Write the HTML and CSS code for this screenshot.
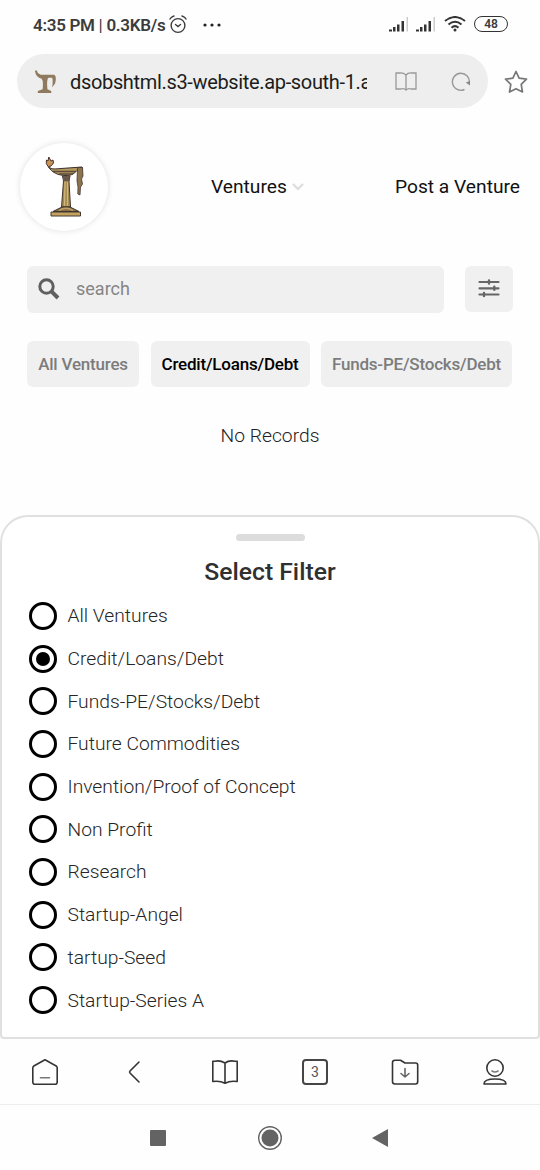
FILE: index.html
```html
<!DOCTYPE html>
<html lang="en">
<head>
<meta charset="utf-8">
<title>Ventures</title>
<link rel="stylesheet" href="styles.css">
</head>
<body>
<svg class="defs" width="0" height="0">
  <defs>
    <g id="torch">
      <path d="M9.500 14C13 16.500 16 16 22 15.500L43 14V17.500H38C34 22 31 22.500 27 22.500C19 22.500 13 19.500 9.500 14Z" fill="#b49a60" stroke="#3d3029" stroke-width="1"/>
      <path d="M14 18.500H37M20 21H34" stroke="#5d4a3a" stroke-width="1.300"/>
      <path d="M9.500 14Q6 10.500 7.500 7L9 8L9.800 4L12 8L14 7Q16 10 12 13Z" fill="#c69455" stroke="#4b3431" stroke-width="1"/>
      <path d="M38.500 14.500H43.500L44 23L42.500 26L43.500 31L41.500 34L41 42L38.800 41L39 34L38 28Z" fill="#8c754d" stroke="#443633" stroke-width=".8"/>
      <path d="M23.500 23H31L30 28L31.500 54H22.500L24.500 28Z" fill="#a58a50" stroke="#43352e" stroke-width="1"/>
      <path d="M26 29L25.500 53M28.500 29V53" stroke="#cfb67a" stroke-width="1.200"/>
      <path d="M24 23.500H30.500V28H24Z" fill="#69564d"/>
      <path d="M23 54H31L40 58.500H14Z" fill="#8a724d" stroke="#372d2b" stroke-width="1"/>
      <path d="M20 57.500Q27 53 34 57.500" fill="none" stroke="#c1a364" stroke-width="1.300"/>
      <path d="M12 59H41.500V63H12Z" fill="#c3a260" stroke="#493c31" stroke-width="1"/>
    </g>
    <g id="mark" fill="#8f7a5e">
      <path d="M1 1Q3-1 4 3L7 5H21Q24 6 22 14L19 18Q20 11 19 8H15Q13 10 14 20L18 22V24H4V22L9 20Q10 11 8 9Q2 8 1 1Z"/>
    </g>
    <g id="signal" fill="#333">
      <path d="M0 12.500h3v2H0zM4 10h2.500v4.500H4zM8 7.500h2.500v7H8zM12.500 4h2.500v10.500h-2.500z"/>
      <path d="M17.500 0H19v14.500h-1.500z" fill="#ccc"/>
    </g>
  </defs>
</svg>
<div class="screen">
  <div class="status">
    <span class="clock">4:35 PM <span class="pipe">|</span> 0.3KB/s</span>
    <svg class="alarm" width="18" height="19" viewBox="0 0 18 19" fill="none" stroke="#3c3c3c" stroke-width="1.400" stroke-linecap="round"><circle cx="9" cy="10.500" r="6.900"/><path d="M1 4Q2 2 5 1M13 1Q16 2 17 4M6.500 9.500L9 11.500L11.500 9.500"/></svg>
    <svg class="dots" width="18" height="4" viewBox="0 0 18 4" fill="#222"><circle cx="2" cy="2" r="1.600"/><circle cx="9" cy="2" r="1.600"/><circle cx="16" cy="2" r="1.600"/></svg>
    <span class="grow"></span>
    <svg class="sig" width="20" height="15"><use href="#signal"/></svg>
    <svg class="sig second" width="20" height="15"><use href="#signal"/></svg>
    <svg class="wifi" width="22" height="16" viewBox="0 0 22 16" fill="none" stroke="#333" stroke-width="2"><path d="M1 5Q11-3 21 5M4.500 8.500Q11 3 17.500 8.500M7.500 11.700Q11 8.500 14.500 11.700"/><circle cx="11" cy="14" r="1.500" fill="#333" stroke="none"/></svg>
    <span class="battery">48</span>
  </div>

  <div class="browser-bar">
    <div class="address">
      <svg class="favicon" width="23" height="24" viewBox="0 0 24 25"><use href="#mark"/></svg>
      <span class="url">dsobshtml.s3-website.ap-south-1.a</span>
      <svg class="reader" width="22" height="19" viewBox="0 0 22 19" fill="none" stroke="#999" stroke-width="1.300"><path d="M11 3Q8 .5 5 1H1V17H6Q9 16 11 18Q13 16 16 17H21V1H17Q13 .5 11 3ZM11 3V18"/></svg>
      <svg class="reload" width="20" height="20" viewBox="0 0 20 20"><path d="M13.500 17.500A8.500 8.500 0 1 1 18.300 11" fill="none" stroke="#999" stroke-width="1.400"/><path d="M14.800 10.500L19 9V13.500Z" fill="#888"/></svg>
    </div>
    <svg class="star" width="24" height="24" viewBox="0 0 24 24" fill="none" stroke="#777" stroke-width="1.700" stroke-linejoin="round"><path d="M12 1.500L15.100 8.100L22.500 9.200L17.200 14.400L18.500 22L12 18.700L5.500 22L6.800 14.400L1.500 9.200L8.900 8.100Z"/></svg>
  </div>

  <header class="site-header">
    <div class="logo"><svg width="52" height="65" viewBox="0 0 52 65"><use href="#torch"/></svg></div>
    <a class="ventures">Ventures<svg width="12" height="8" viewBox="0 0 12 8" fill="none" stroke="#dedede" stroke-width="2.400"><path d="M1 1L6 6L11 1"/></svg></a>
    <a class="post">Post a Venture</a>
  </header>

  <div class="search-row">
    <label class="search"><svg width="22" height="22" viewBox="0 0 22 22" fill="none" stroke="#606060" stroke-width="3"><circle cx="8.500" cy="8.500" r="6.700"/><path d="M13.200 13.200L20 20" stroke-width="4"/></svg><span>search</span></label>
    <div class="filter-button"><svg width="22" height="20" viewBox="0 0 22 20" stroke="#666" stroke-width="2.200" stroke-linecap="round"><path d="M1.500 4H20.500M1.500 10.300H20.500M1.500 16.500H20.500"/><path d="M11 2.500V5.500M16.300 8.800V11.800M6 15V18" stroke-width="2.400"/></svg></div>
  </div>
  <div class="chips">
    <span class="chip c1"><b>All Ventures</b></span>
    <span class="chip c2 selected"><b>Credit/Loans/Debt</b></span>
    <span class="chip c3"><b>Funds-PE/Stocks/Debt</b></span>
  </div>
  <p class="empty">No Records</p>

  <section class="sheet">
    <div class="handle"></div>
    <h1>Select Filter</h1>
    <ul>
      <li><i></i><span>All Ventures</span></li>
      <li class="on"><i></i><span>Credit/Loans/Debt</span></li>
      <li><i></i><span>Funds-PE/Stocks/Debt</span></li>
      <li><i></i><span>Future Commodities</span></li>
      <li><i></i><span>Invention/Proof of Concept</span></li>
      <li><i></i><span>Non Profit</span></li>
      <li><i></i><span>Research</span></li>
      <li><i></i><span>Startup-Angel</span></li>
      <li><i></i><span>tartup-Seed</span></li>
      <li><i></i><span>Startup-Series A</span></li>
    </ul>
  </section>

  <nav class="toolbar">
    <div><svg width="28" height="28" viewBox="0 0 28 28"><path d="M14 1.800L25.200 8Q26.200 8.700 26.200 10V24Q26.200 26.300 24 26.300H4Q1.800 26.300 1.800 24V10Q1.800 8.700 2.800 8Z"/><path d="M9.500 19.700H18.500" stroke="#777"/></svg></div>
    <div><svg width="28" height="28" viewBox="0 0 28 28"><path d="M18 4L9 13Q8.200 14 9 15L18 24"/></svg></div>
    <div><svg width="28" height="28" viewBox="0 0 28 28"><path d="M14 5Q9 2 4 3.200H1.800V23.500Q9 22.500 14 25.300Q19 22.500 26.200 23.500V3.200H24Q18 2 14 5ZM14 5V25"/></svg></div>
    <div><span class="tabs">3</span></div>
    <div><svg width="28" height="28" viewBox="0 0 28 28"><path d="M1.500 4.500Q1.500 2.200 4 2.200H9.500L14 5H24.500Q26.700 5 26.700 7V23.500Q26.700 26 24.500 26H4Q1.500 26 1.500 23.500Z"/><path d="M14 10.500V19M10 15.500L14 19L18 15.500" stroke="#666"/></svg></div>
    <div><svg width="28" height="28" viewBox="0 0 28 28"><circle cx="14" cy="10" r="8.200"/><path d="M11 13Q14 15 17 13" stroke="#777"/><path d="M3 26Q3 21 14 21Q25 21 25 26Z"/></svg></div>
  </nav>
  <nav class="system">
    <svg width="16" height="16"><rect width="16" height="16" rx="1" fill="#636363"/></svg>
    <svg width="26" height="26" viewBox="0 0 26 26"><circle cx="13" cy="13" r="11.300" fill="none" stroke="#636363" stroke-width="1.400"/><circle cx="13" cy="13" r="8.500" fill="#636363"/></svg>
    <svg width="16" height="18" viewBox="0 0 16 18"><path d="M0 9L16 0V18Z" fill="#636363"/></svg>
  </nav>
</div>
</body>
</html>
```
FILE: styles.css
```css
* { box-sizing: border-box; }
body { margin: 0; background: #fefefe; font-family: Roboto, sans-serif; color: #111; }
svg { display: block; flex-shrink: 0; }
.defs { width: 0; height: 0; overflow: hidden; float: left; }
.screen { width: 540px; height: 1170px; display: flex; flex-direction: column; overflow: hidden; }
.status { height: 50px; flex: none; display: flex; align-items: center; padding: 0 32px 0 33px; color: #3c3c3c; }
.clock { font-size: 17px; font-weight: 600; letter-spacing: -.3px; white-space: nowrap; width: 132px; }
.pipe { font-weight: 400; }
.alarm { margin-left: 4px; margin-top: -1px; }
.dots { margin-left: 16px; margin-top: -1px; }
.grow { flex: 1; }
.sig { margin-top: -1px; }
.second { margin-left: 7px; }
.wifi { margin: -2px 8px 0; }
.battery { width: 34px; height: 16px; margin-top: -2px; border: 1.500px solid #333; border-radius: 8px; font-size: 12px; font-weight: 600; line-height: 14px; text-align: center; }

.browser-bar { height: 62px; flex: none; padding: 4px 12px 4px 17px; display: flex; align-items: center; justify-content: space-between; }
.address { width: 471px; height: 54px; background: #eee; border-radius: 27px; display: flex; align-items: center; padding: 1px 17px 0; }
.url { width: 298px; margin-left: 13px; overflow: hidden; white-space: nowrap; font-size: 20px; letter-spacing: -.34px; line-height: 28px; color: #1c1c1c; }
.reader { margin-left: 28px; }
.reload { margin-left: 34px; }
.star { margin-top: 1px; }

.site-header { height: 149px; flex: none; display: flex; align-items: center; padding: 0 20px; font-size: 19.200px; }
.logo { width: 88px; height: 88px; border-radius: 50%; background: #fff; box-shadow: 0 0 6px rgba(0,0,0,.12); display: flex; align-items: center; justify-content: center; }
.logo svg { margin-top: -2px; margin-left: 1px; }
.ventures { display: flex; align-items: center; margin-left: 103px; }
.ventures svg { margin-left: 5px; }
.post { margin-left: auto; }

.search-row { flex: none; margin: 5px 27px 0; height: 47px; display: flex; justify-content: space-between; }
.search { width: 417px; background: #f0f0f0; border-radius: 6px; display: flex; align-items: center; padding: 0 0 2px 11px; color: #858585; font-size: 18px; }
.search span { margin-left: 16px; }
.filter-button { width: 48px; height: 46px; background: #f0f0f0; border-radius: 6px; display: flex; align-items: center; justify-content: center; padding-bottom: 2px; }
.chips { flex: none; height: 46px; margin: 28px 28px 0 27px; display: flex; justify-content: space-between; }
.chip { background: #f0f0f0; color: #7c7c7c; border-radius: 6px; font-size: 17px; letter-spacing: -.21px; white-space: nowrap; display: flex; align-items: center; justify-content: center; }
.chip b { font-weight: 500; }
.selected { color: #000; }
.c1 { width: 112px; }
.c2 { width: 159px; }
.c3 { width: 191px; }
.empty { flex: none; margin: 35px 0 0; height: 28px; line-height: 28px; text-align: center; font-size: 19.250px; font-weight: 300; color: #222; }

.sheet { flex: none; height: 524px; margin-top: 65px; border: 2px solid #e0e0e0; border-radius: 28px 28px 4px 4px; background: #fff; }
.handle { width: 69px; height: 7px; border-radius: 4px; margin: 17px auto 0; background: #dcdcdc; }
.sheet h1 { margin: 15px 0 6.500px; font-size: 24.700px; line-height: 32px; font-weight: 500; text-align: center; color: #303030; }
.sheet ul { list-style: none; margin: 0; padding: 0 0 0 26.500px; }
.sheet li { height: 42.700px; display: flex; align-items: center; font-size: 19.250px; font-weight: 300; color: #252525; }
.sheet i { width: 28px; height: 28px; border: 3px solid #000; border-radius: 50%; display: flex; align-items: center; justify-content: center; }
.on i::after { content: ""; width: 14px; height: 14px; border-radius: 50%; background: #000; }
.sheet li span { margin-left: 11px; }

.toolbar { height: 66px; flex: none; border-bottom: 1px solid #eee; display: grid; grid-template-columns: repeat(6, 1fr); align-items: center; justify-items: center; }
.toolbar svg { fill: none; stroke: #353535; stroke-width: 1.600; stroke-linejoin: round; stroke-linecap: round; }
.tabs { display: block; width: 26px; height: 26px; border: 2px solid #454545; border-radius: 4px; text-align: center; font-size: 14px; line-height: 22px; color: #555; }
.system { flex: 1; display: flex; align-items: center; padding-left: 150px; }
.system svg:nth-child(2) { margin-left: 91px; }
.system svg:nth-child(3) { margin-left: 89px; }
```
